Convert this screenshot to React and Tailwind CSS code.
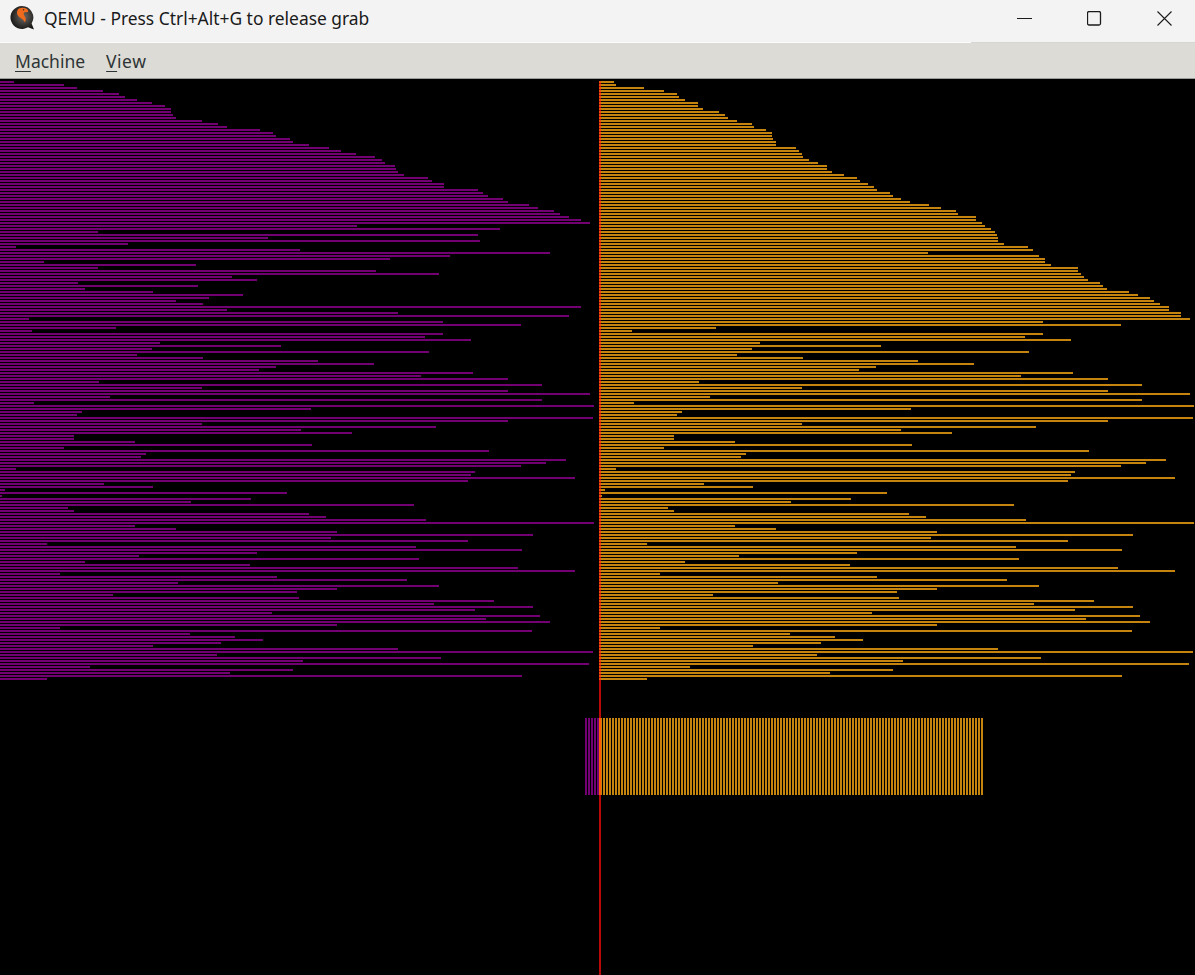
const purple = [
  14, 64, 77, 103, 119, 125, 137, 152, 165, 171, 171, 173, 176, 202, 218, 227, 260, 273, 276, 290,
  293, 309, 329, 341, 356, 375, 382, 385, 395, 396, 398, 404, 428, 432, 444, 444, 478, 483, 488, 503,
  508, 529, 538, 554, 560, 569, 581, 590, 357, 500, 98, 478, 268, 480, 128, 16, 300, 550, 450, 390,
  44, 196, 98, 376, 439, 232, 257,
  78, 198, 85, 153, 243, 209, 176, 203, 581, 227, 398, 569, 29, 443, 521, 116, 32, 443, 425, 471,
  160, 281, 152, 429, 137, 203, 318, 374, 276, 259, 473, 421, 508, 99, 542, 202, 508, 590, 110, 542,
  34, 594, 311, 82, 77, 593, 508, 202, 436, 301, 352, 74, 74, 135, 312, 64, 489, 146, 141, 566,
  546, 521, 16, 475, 471, 575,
  468, 104, 153, 5, 287, 2, 251, 191, 414, 68, 74, 309, 326, 426, 594, 135, 176, 337, 533, 331,
  468, 47, 416, 522, 257, 139, 419, 85, 250, 518, 575, 60, 277, 407, 178, 439, 337, 297, 113, 299,
  494, 434, 533, 475, 272, 540, 486, 550, 337, 60, 532, 190, 235, 263, 221, 153, 398, 593, 217, 441,
  303, 589, 90, 293, 230, 522, 47,
];

// the sorted run on the right is longer, the rest of the rows are the same as on the left
const orange = [
  14, 16, 44, 64, 77, 79, 85, 98, 98, 103, 119, 125, 128, 137, 152, 154, 166, 172, 172, 173,
  176, 176, 196, 199, 202, 203, 209, 218, 227, 227, 232, 244, 257, 260, 268, 274, 277, 290, 293, 301,
  310, 329, 341, 356, 358, 376, 376, 382, 385, 391, 395, 397, 398, 398, 404, 428, 433, 328, 439, 445,
  445, 451, 478, 478, 481, 484, 488, 500, 503, 507, 529, 538, 550, 554, 560, 569, 569, 581, 581, 590,
  ...purple.slice(80),
];

// svg starts right under the menu bar, first row is at page y=81
const TOP = 2;
const MID = 600;

function rowsPath(list, x0) {
  return list.map((w, i) => `M${x0} ${TOP + i * 3}h${w}v2h-${w}z`).join("");
}

function stripesPath(from, count) {
  let d = "";
  for (let k = 0; k < count; k++) d += `M${from + k * 3} 639h2v77h-2z`;
  return d;
}

function Logo() {
  return (
    <svg width="26" height="26" viewBox="0 0 26 26" className="shrink-0">
      <defs>
        <radialGradient id="ball" cx="0.55" cy="0.45" r="0.6">
          <stop offset="0" stopColor="#6e6a66" />
          <stop offset="0.7" stopColor="#2e2c2a" />
          <stop offset="1" stopColor="#141312" />
        </radialGradient>
      </defs>
      <path d="M12 1a11.5 11.5 0 1 0 6 21.3l6 2.2-2.4-6A11.5 11.5 0 0 0 12 1z" fill="url(#ball)" />
      <path
        d="M9 3.5c3-1.5 7-.8 8.5 1 .8 1 1 2.2 .2 2.6-1.5 .4-3-.2-3.8 .8-.8 1.200 .6 2.800 1.400 4.300 .8 1.600 .6 3.800-.4 5.300-.6-1.600-2-3-3.800-4.200C8.800 11.800 6.800 10.200 7 7.500 7.100 5.800 7.800 4.200 9 3.500z"
        fill="#ee6a1c"
      />
      <circle cx="13.500" cy="4.800" r="0.700" fill="#2e2c2a" />
    </svg>
  );
}

function WindowButtons() {
  return (
    <div className="flex items-center pr-[23px]">
      <svg width="15" height="15" viewBox="0 0 15 15">
        <path d="M0 7.500h15" stroke="#1b1b1b" strokeWidth="1" />
      </svg>
      <svg width="15" height="15" viewBox="0 0 15 15" className="ml-[55px]">
        <rect x=".5" y=".5" width="13" height="13.500" rx="1.500" fill="none" stroke="#1b1b1b" strokeWidth="1.300" />
      </svg>
      <svg width="15" height="15" viewBox="0 0 15 15" className="ml-[55px]">
        <path d="M.5 .5l14 14M14.500 .5l-14 14" stroke="#1b1b1b" strokeWidth="1.100" />
      </svg>
    </div>
  );
}

export default function App() {
  return (
    <div className="flex h-[975px] w-[1195px] flex-col overflow-hidden bg-black font-['Noto_Sans',sans-serif]">
      <div className="flex h-[42px] shrink-0 items-center justify-between bg-[#f3f3f3] pb-[5px]">
        <div className="flex items-center gap-[8px] pl-[10px]">
          <Logo />
          <span className="text-[17.4px] text-[#1a1a1a]">QEMU - Press Ctrl+Alt+G to release grab</span>
        </div>
        <WindowButtons />
      </div>
      <div className="flex h-px shrink-0">
        <div className="w-[971px] bg-[#fbfbfb]" />
        <div className="flex-1 bg-[#d6d6d2]" />
      </div>

      <div className="flex h-[36px] shrink-0 items-center gap-[21px] border-b border-[#9c9c98] bg-[#dcdbd5] pl-[15px] pt-[2px] text-[17.5px] text-[#2e3436]">
        <span>
          <span className="underline decoration-1 underline-offset-[3px]">M</span>achine
        </span>
        <span className="tracking-[0.5px]">
          <span className="underline decoration-1 underline-offset-[3px]">V</span>iew
        </span>
      </div>

      <svg width="1195" height="896" viewBox="0 0 1195 896" className="block shrink-0" shapeRendering="crispEdges">
        <path d={rowsPath(purple, 0)} fill="#720072" />
        <path d={rowsPath(orange, MID)} fill="#c4840e" />
        <path d={stripesPath(585, 5)} fill="#720072" />
        <path d={stripesPath(MID, 128)} fill="#c4840e" />
        <rect x="599" y={TOP} width="2" height="894" fill="#b80808" />
        <path d={rowsPath(purple.map(() => 2), 599)} fill="#e8500c" />
        <rect x="599" y="639" width="2" height="77" fill="#ff5a00" />
      </svg>
    </div>
  );
}
